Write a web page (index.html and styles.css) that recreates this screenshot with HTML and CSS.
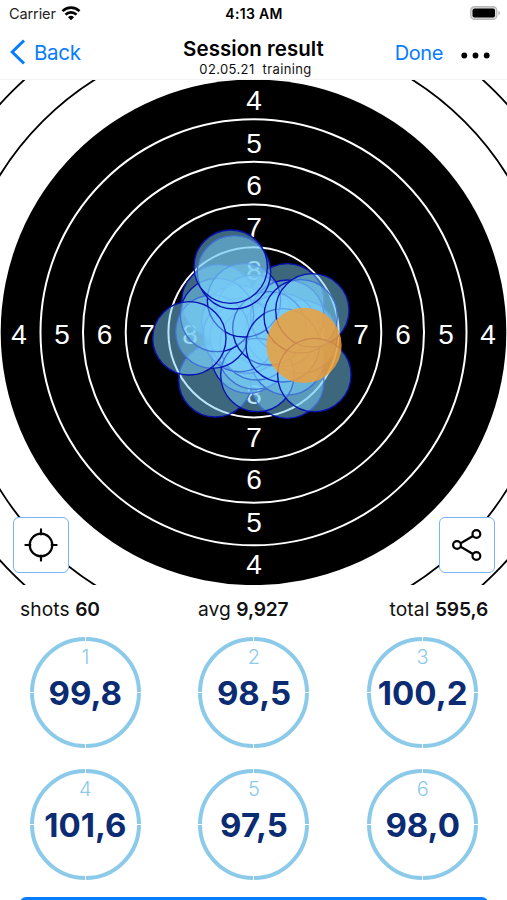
FILE: index.html
```html
<!DOCTYPE html>
<html lang="en">
<head>
<meta charset="utf-8">
<title>Session result</title>
<link rel="stylesheet" href="styles.css">
</head>
<body>
<main class="screen">
  <header class="header">
    <div class="status">
      <div class="carrier"><span>Carrier</span>
        <svg width="20" height="15" viewBox="0 0 20 15"><g fill="none" stroke="#000" stroke-width="2.7"><path d="M1.5 5.1a12.2 12.2 0 0 1 17 0"/><path d="M4.5 8.6a7.9 7.9 0 0 1 11 0"/></g><path d="M10 14.2l-3-3a4.3 4.3 0 0 1 6 0z"/></svg>
      </div>
      <time class="clock">4:13 AM</time>
      <svg class="battery" width="31" height="14" viewBox="0 0 31 14"><rect x=".75" y=".75" width="26" height="12.5" rx="3.6" fill="#ddd" stroke="#b8b8b8" stroke-width="1.3"/><rect x="2.5" y="2.5" width="22.5" height="9" rx="2"/><path d="M28.3 4.7q1.8.8 1.8 2.3t-1.8 2.3z" fill="#b8b8b8"/></svg>
    </div>
    <nav class="nav">
      <a class="back"><svg width="16" height="26" viewBox="0 0 16 26"><path d="M14 1.5L2.2 13 14 24.5" fill="none" stroke="#087cff" stroke-width="3"/></svg><span>Back</span></a>
      <div class="heading"><h1>Session result</h1><p><span>02.05.21</span><span>training</span></p></div>
      <div class="actions"><a>Done</a><svg width="29" height="7" viewBox="0 0 29 7"><circle cx="3.3" cy="3.5" r="2.9"/><circle cx="14.5" cy="3.5" r="2.9"/><circle cx="25.7" cy="3.5" r="2.9"/></svg></div>
    </nav>
  </header>
  <section class="target">
    <svg class="board" width="507" height="505" viewBox="0 80 507 505">
      <g class="outer"><circle cx="253.5" cy="332.3" r="341"/><circle cx="253.5" cy="332.3" r="298.3"/></g>
      <circle cx="253.5" cy="332.3" r="252.8"/>
      <g class="inner"><circle cx="253.5" cy="332.3" r="213"/><circle cx="253.5" cy="332.3" r="170.5"/><circle cx="253.5" cy="332.3" r="127.8"/><circle cx="253.5" cy="332.3" r="85.1"/></g>
      <g class="digits">
        <text x="254" y="110">4</text><text x="254" y="152.7">5</text><text x="254" y="195">6</text><text x="254" y="237">7</text><text x="254" y="279.5">8</text>
        <text x="254" y="404">8</text><text x="254" y="446.5">7</text><text x="254" y="489">6</text><text x="254" y="531.7">5</text><text x="254" y="574">4</text>
        <text x="19" y="344">4</text><text x="62" y="344">5</text><text x="104.5" y="344">6</text><text x="147" y="344">7</text><text x="190" y="344">8</text>
        <text x="318" y="344">8</text><text x="361" y="344">7</text><text x="403" y="344">6</text><text x="446" y="344">5</text><text x="488" y="344">4</text>
      </g>
      <g class="shots" transform="translate(140 220) scale(.33333)">
        <circle cx="442" cy="241" r="110"/><circle cx="235" cy="244" r="110"/><circle cx="226" cy="481" r="110"/><circle cx="442" cy="485" r="110"/>
        <circle cx="325" cy="410" r="110"/><circle cx="345" cy="398" r="110"/><circle cx="442" cy="415" r="110"/><circle cx="482" cy="350" r="110"/><circle cx="375" cy="330" r="110"/><circle cx="295" cy="305" r="110"/><circle cx="340" cy="275" r="110"/><circle cx="320" cy="350" r="110"/><circle cx="350" cy="370" r="110"/><circle cx="425" cy="330" r="110"/><circle cx="300" cy="345" r="110"/><circle cx="442" cy="290" r="110"/>
        <circle cx="352" cy="465" r="110"/><circle cx="217" cy="335" r="110"/><circle cx="231" cy="285" r="110"/><circle cx="388" cy="325" r="110"/><circle cx="312" cy="241" r="110"/><circle cx="428" cy="376" r="110"/><circle cx="482" cy="289" r="110"/><circle cx="517" cy="271" r="110"/>
        <circle cx="282" cy="157" r="110"/><circle cx="272" cy="140" r="110"/><circle cx="148" cy="355" r="110"/><circle cx="523" cy="465" r="110"/>
        <circle class="last" cx="492" cy="376" r="113"/>
      </g>
    </svg>
    <button class="tool tool-left" aria-label="Center"><svg width="36" height="36" viewBox="0 0 36 36"><g fill="none" stroke="#000" stroke-width="2.2" stroke-linecap="round"><circle cx="18" cy="18" r="11.3"/><path d="M18 2.4v5M18 28.6v5M2.4 18h5M28.6 18h5"/></g></svg></button>
    <button class="tool tool-right" aria-label="Share"><svg width="36" height="36" viewBox="0 0 36 36"><g fill="none" stroke="#000" stroke-width="2.2"><path d="M11.7 16.2L24 9M11.7 19.8L24 27"/><circle cx="8" cy="18" r="3.9"/><circle cx="27.4" cy="7" r="3.9"/><circle cx="27.4" cy="29" r="3.9"/></g></svg></button>
  </section>
  <section class="stats"><div>shots <b>60</b></div><div>avg <b>9,927</b></div><div>total <b>595,6</b></div></section>
  <section class="series">
    <div class="ring"><span>1</span><strong>99,8</strong></div>
    <div class="ring"><span>2</span><strong>98,5</strong></div>
    <div class="ring"><span>3</span><strong>100,2</strong></div>
    <div class="ring"><span>4</span><strong>101,6</strong></div>
    <div class="ring"><span>5</span><strong>97,5</strong></div>
    <div class="ring"><span>6</span><strong>98,0</strong></div>
  </section>
  <button class="primary" aria-label="Continue"></button>
</main>
</body>
</html>
```
FILE: styles.css
```css
* { box-sizing: border-box; }
body { margin: 0; background: #fff; color: #111; font-family: Inter, "Liberation Sans", sans-serif; }
.screen { width: 507px; height: 900px; overflow: hidden; display: flex; flex-direction: column; }
.header { height: 80px; flex: none; border-bottom: 1px solid #f3f3f3; }
.status { height: 27px; display: grid; grid-template-columns: 1fr auto 1fr; align-items: center; padding: 0 6px 0 9px; }
.carrier { display: flex; align-items: center; gap: 5px; font-size: 14.5px; letter-spacing: -.1px; color: #222; }
.carrier svg { margin-top: -1px; }
.clock { font-size: 14px; font-weight: 600; letter-spacing: .3px; color: #000; transform: translateX(-1px); }
.battery { justify-self: end; margin-top: -1px; }
.nav { height: 52px; display: grid; grid-template-columns: 1fr auto 1fr; align-items: center; padding: 0 17px 0 10px; }
.back { display: flex; align-items: center; gap: 8px; color: #087cff; font-size: 20.5px; line-height: 24px; letter-spacing: -.3px; }
.back svg { margin-top: -2px; }
.heading { text-align: center; padding: 9px 0 0 7px; }
.heading h1 { margin: 0; font-size: 20.5px; line-height: 24px; font-weight: 600; letter-spacing: .05px; color: #000; }
.heading p { margin: 0; display: flex; justify-content: center; gap: 8px; padding-left: 4px; font-size: 13px; line-height: 17px; letter-spacing: .37px; }
.actions { display: flex; justify-content: flex-end; align-items: center; gap: 18px; color: #087cff; font-size: 20px; letter-spacing: -.4px; }
.actions svg { margin-top: 5px; }
.target { position: relative; height: 505px; flex: none; }
.board { display: block; }
.outer { fill: none; stroke: #000; stroke-width: 1.8; }
.inner { fill: none; stroke: #fff; stroke-width: 2; }
.digits { fill: #fff; font-family: "Liberation Sans", sans-serif; font-size: 28px; text-anchor: middle; }
.shots { fill: rgba(120, 206, 247, .5); stroke: #0712b5; stroke-width: 4; }
.shots .last { fill: rgba(240, 158, 56, .84); stroke: none; }
.tool { position: absolute; bottom: 12px; width: 56px; height: 56px; padding: 0; border: 1.5px solid #77b5fa; border-radius: 6px; background: #fff; display: flex; align-items: center; justify-content: center; }
.tool-left { left: 13px; }
.tool-right { right: 12px; }
.stats { height: 52px; flex: none; display: flex; justify-content: space-between; padding: 11px 19px 0 20px; font-size: 19.2px; line-height: 26px; }
.stats > div { letter-spacing: .1px; }
.stats > div:nth-child(2) { margin-left: -3px; }
.stats b { font-weight: 600; letter-spacing: -.15px; }
.series { display: grid; grid-template-columns: repeat(3, 1fr); gap: 21px 0; justify-items: center; padding-left: 1px; }
.ring { position: relative; width: 111px; height: 111px; border: 4px solid #8ccaea; border-radius: 50%; display: flex; flex-direction: column; align-items: center; padding-top: 4px; }
.ring::before, .ring::after { content: ""; position: absolute; background: #fff; }
.ring::before { left: 51px; top: -4px; width: 1px; height: 111px; }
.ring::after { left: -4px; top: 51px; width: 111px; height: 1px; }
.ring span, .ring strong { position: relative; z-index: 1; }
.ring span { color: #8ccaea; font-size: 20px; line-height: 24px; font-weight: 300; }
.ring strong { color: #0b2b73; font-size: 33px; line-height: 40px; font-weight: 700; margin-top: 4px; white-space: nowrap; }
.primary { margin: 17px 19px 0 20px; height: 50px; flex: none; border: 0; border-radius: 6px; background: #087cff; }
```
